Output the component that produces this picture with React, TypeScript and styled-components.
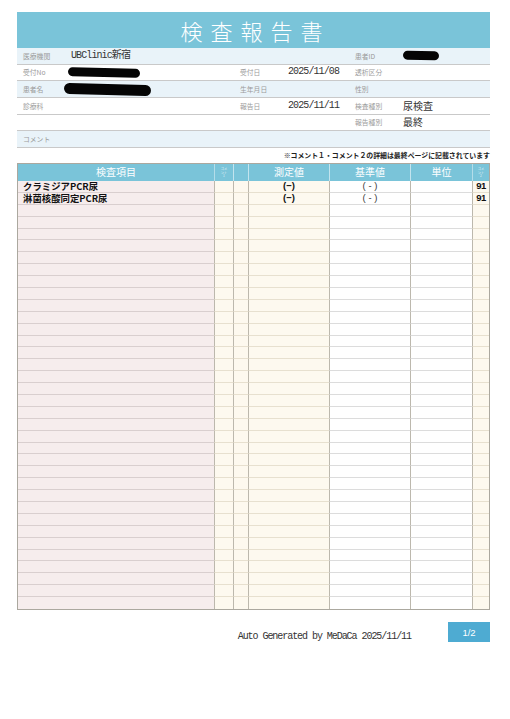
import React from "react";
import styled, { createGlobalStyle } from "styled-components";

const Global = createGlobalStyle`
  html, body { margin: 0; padding: 0; background: #ffffff; }
  body { font-family: "Noto Sans CJK JP", "Noto Sans", sans-serif; color: #222; }
`;

const Page = styled.div`
  width: 510px;
  height: 719px;
  box-sizing: border-box;
  padding: 12px 20px 0 17px;
  display: flex;
  flex-direction: column;
`;

const TitleBar = styled.div`
  height: 36px;
  background: #7ac4d9;
  display: flex;
  align-items: center;
  justify-content: center;
`;

const Title = styled.h1`
  margin: 0;
  padding-left: 4px;
  font-family: "Noto Sans CJK JP", sans-serif;
  font-weight: 300;
  font-size: 22px;
  letter-spacing: 8px;
  line-height: 36px;
  color: #ffffff;
`;

const Info = styled.div`
  display: flex;
  flex-direction: column;
`;

const InfoRow = styled.div<{ $tint?: boolean }>`
  height: 16.67px;
  box-sizing: border-box;
  display: grid;
  grid-template-columns: 48px 169px 48px 67px 48px 1fr;
  align-items: center;
  background: ${(p) => (p.$tint ? "#e9f3f9" : "#ffffff")};
  border-bottom: 1px solid #c9c9c9;
`;

const Label = styled.span`
  padding-left: 6px;
  font-size: 6.8px;
  line-height: 10px;
  color: #9b9b9b;
  white-space: nowrap;
  font-family: "Noto Sans CJK JP", sans-serif;
`;

const Value = styled.span`
  padding-left: 6px;
  font-family: "Liberation Mono", "Noto Sans CJK JP", monospace;
  font-size: 10px;
  line-height: 12px;
  letter-spacing: -0.9px;
  color: #333;
  white-space: nowrap;
  display: flex;
  align-items: center;
`;

const JpValue = styled.span`
  padding-left: 6px;
  font-family: "Noto Sans CJK JP", sans-serif;
  font-size: 10px;
  line-height: 12px;
  color: #333;
  white-space: nowrap;
`;

const Redact = styled.span<{ $w: number; $h: number; $dx?: number }>`
  display: inline-block;
  width: ${(p) => p.$w}px;
  height: ${(p) => p.$h}px;
  margin-left: ${(p) => p.$dx ?? 0}px;
  background: #050505;
  border-radius: ${(p) => p.$h / 2}px;
  transform: rotate(1.5deg);
`;

const Note = styled.div`
  height: 15px;
  line-height: 15px;
  text-align: right;
  font-size: 6.9px;
  font-weight: 700;
  color: #222;
  white-space: nowrap;
`;

const COLS = "196px 19px 15px 81px 81px 62px 1fr";

const Table = styled.div`
  box-sizing: border-box;
  border: 1.5px solid #aba89f;
  display: flex;
  flex-direction: column;
`;

const HeadRow = styled.div`
  display: grid;
  grid-template-columns: ${COLS};
  height: 17px;
  background: #7ac4d9;
`;

const HeadCell = styled.div<{ $first?: boolean; $tiny?: boolean }>`
  box-sizing: border-box;
  border-left: ${(p) => (p.$first ? "none" : "1px solid rgba(255,255,255,0.55)")};
  display: flex;
  align-items: center;
  justify-content: center;
  color: #ffffff;
  font-size: ${(p) => (p.$tiny ? "3.2px" : "10px")};
  line-height: ${(p) => (p.$tiny ? "3.6px" : "14px")};
  text-align: center;
  white-space: pre;
  opacity: ${(p) => (p.$tiny ? 0.8 : 1)};
`;

const BodyRow = styled.div`
  display: grid;
  grid-template-columns: ${COLS};
  height: 11.9px;
`;

type Tone = "pink" | "cream" | "white";
const toneBg: Record<Tone, string> = { pink: "#f6eded", cream: "#fdf9ef", white: "#ffffff" };
const toneLine: Record<Tone, string> = { pink: "#d9cfcf", cream: "#e7e0cf", white: "#dcdcdc" };

const Cell = styled.div<{ $tone: Tone; $first?: boolean; $align?: string; $last?: boolean }>`
  box-sizing: border-box;
  background: ${(p) => toneBg[p.$tone]};
  border-left: ${(p) => (p.$first ? "none" : "1px solid #bcb8ad")};
  border-bottom: ${(p) => (p.$last ? "none" : `1px solid ${toneLine[p.$tone]}`)};
  display: flex;
  align-items: center;
  justify-content: ${(p) => p.$align ?? "flex-start"};
  white-space: nowrap;
`;

const ItemName = styled.span`
  padding-left: 5px;
  font-family: "Noto Sans CJK JP", sans-serif;
  font-weight: 700;
  font-size: 9.4px;
  line-height: 10px;
  color: #111;
`;

const Measured = styled.span`
  font-family: "Liberation Sans", sans-serif;
  font-weight: 700;
  font-size: 9.5px;
  line-height: 10px;
  color: #111;
`;

const RefVal = styled.span`
  font-family: "Liberation Sans", sans-serif;
  font-weight: 400;
  font-size: 9.5px;
  line-height: 10px;
  color: #3a3a3a;
`;

const Code = styled.span`
  font-family: "Liberation Sans", sans-serif;
  font-weight: 700;
  font-size: 9.5px;
  letter-spacing: -0.6px;
  line-height: 10px;
  color: #111;
`;

const Footer = styled.div`
  margin-top: 12px;
  display: flex;
  justify-content: flex-end;
  align-items: flex-end;
  gap: 37px;
`;

const Generated = styled.span`
  font-family: "Liberation Mono", monospace;
  font-size: 10px;
  letter-spacing: -1.05px;
  line-height: 11px;
  color: #333;
`;

const PageBadge = styled.div`
  width: 42px;
  height: 20px;
  background: #4eabd2;
  color: #ffffff;
  font-family: "Liberation Sans", sans-serif;
  font-size: 9.5px;
  display: flex;
  align-items: center;
  justify-content: center;
`;

const tones: Tone[] = ["pink", "cream", "cream", "cream", "white", "white", "cream"];

const rows = [
  { name: "クラミジアPCR尿", measured: "(−)", ref: "( - )", code: "91" },
  { name: "淋菌核酸同定PCR尿", measured: "(−)", ref: "( - )", code: "91" },
];

const TOTAL_ROWS = 36;

export default function App() {
  const body = Array.from({ length: TOTAL_ROWS }, (_, i) => rows[i] ?? null);
  return (
    <>
      <Global />
      <Page>
        <TitleBar>
          <Title>検査報告書</Title>
        </TitleBar>
        <Info>
          <InfoRow $tint>
            <Label>医療機関</Label>
            <Value>UBClinic新宿</Value>
            <span />
            <span />
            <Label>患者ID</Label>
            <Value>
              <Redact $w={36} $h={9} />
            </Value>
          </InfoRow>
          <InfoRow>
            <Label>受付No</Label>
            <Value>
              <Redact $w={72} $h={9} $dx={-3} />
            </Value>
            <Label>受付日</Label>
            <Value>2025/11/08</Value>
            <Label>透析区分</Label>
            <span />
          </InfoRow>
          <InfoRow $tint>
            <Label>患者名</Label>
            <Value>
              <Redact $w={87} $h={11} $dx={-7} />
            </Value>
            <Label>生年月日</Label>
            <span />
            <Label>性別</Label>
            <span />
          </InfoRow>
          <InfoRow>
            <Label>診療科</Label>
            <span />
            <Label>報告日</Label>
            <Value>2025/11/11</Value>
            <Label>検査種別</Label>
            <JpValue>尿検査</JpValue>
          </InfoRow>
          <InfoRow>
            <span />
            <span />
            <span />
            <span />
            <Label>報告種別</Label>
            <JpValue>最終</JpValue>
          </InfoRow>
          <InfoRow $tint>
            <Label>コメント</Label>
          </InfoRow>
        </Info>
        <Note>※コメント１・コメント２の詳細は最終ページに記載されています</Note>
        <Table>
          <HeadRow>
            <HeadCell $first>検査項目</HeadCell>
            <HeadCell $tiny>{"コメ\nント\n1"}</HeadCell>
            <HeadCell />
            <HeadCell>測定値</HeadCell>
            <HeadCell>基準値</HeadCell>
            <HeadCell>単位</HeadCell>
            <HeadCell $tiny>{"コメ\nント\n2"}</HeadCell>
          </HeadRow>
          {body.map((r, i) => {
            const last = i === TOTAL_ROWS - 1;
            return (
              <BodyRow key={i}>
                <Cell $tone={tones[0]} $first $last={last}>
                  {r && <ItemName>{r.name}</ItemName>}
                </Cell>
                <Cell $tone={tones[1]} $last={last} />
                <Cell $tone={tones[2]} $last={last} />
                <Cell $tone={tones[3]} $align="center" $last={last}>
                  {r && <Measured>{r.measured}</Measured>}
                </Cell>
                <Cell $tone={tones[4]} $align="center" $last={last}>
                  {r && <RefVal>{r.ref}</RefVal>}
                </Cell>
                <Cell $tone={tones[5]} $last={last} />
                <Cell $tone={tones[6]} $align="center" $last={last}>
                  {r && <Code>{r.code}</Code>}
                </Cell>
              </BodyRow>
            );
          })}
        </Table>
        <Footer>
          <Generated>Auto Generated by MeDaCa 2025/11/11</Generated>
          <PageBadge>1/2</PageBadge>
        </Footer>
      </Page>
    </>
  );
}
